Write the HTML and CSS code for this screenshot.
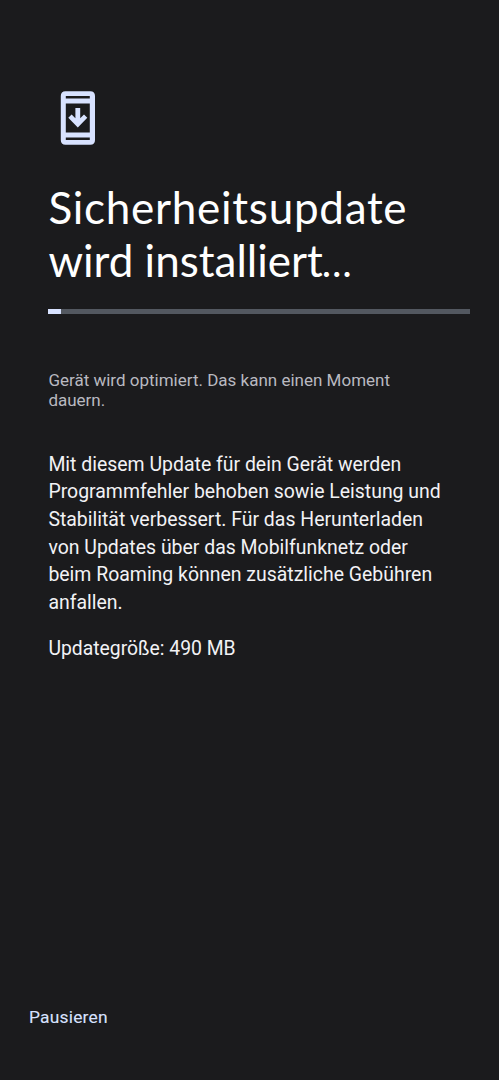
FILE: index.html
```html
<!DOCTYPE html>
<html lang="de">
<head>
<meta charset="utf-8">
<title>Systemupdate</title>
<link rel="stylesheet" href="styles.css">
</head>
<body>
<main class="screen">
  <svg class="icon" viewBox="0 0 36 56" aria-hidden="true">
    <path fill="#d8e2ff" fill-rule="evenodd" d="M5.500 1.200H30.300Q35 1.200 35 6V50Q35 54.800 30.300 54.800H5.500Q.8 54.800 .8 50V6Q.8 1.200 5.500 1.200ZM5.800 6V8.600H29.800V6ZM5.800 13.600V42.400H29.800V13.600ZM5.800 47.400V50H29.800V47.400Z"/>
    <path fill="#d8e2ff" d="M15.400 18H20.200V28.300L24 24.600L27.300 27.800L17.800 37.600L8.300 27.800L11.600 24.600L15.400 28.300Z"/>
  </svg>
  <h1 class="title"><span class="title-line title-first">Sicherheitsupdate</span><span class="title-line title-second">wird installiert<span class="dots">…</span></span></h1>
  <div class="progress"><div class="progress-fill"></div></div>
  <p class="status">Gerät wird optimiert. Das kann einen Moment<br>dauern.</p>
  <p class="description">Mit diesem Update für dein Gerät werden<br>Programmfehler behoben sowie Leistung und<br>Stabilität verbessert. Für das Herunterladen<br>von Updates über das Mobilfunknetz oder<br>beim Roaming können zusätzliche Gebühren<br>anfallen.</p>
  <p class="size">Updategröße: 490 MB</p>
  <button class="pause">Pausieren</button>
</main>
</body>
</html>
```
FILE: styles.css
```css
* { box-sizing: border-box; }
body { margin: 0; background: #1b1b1d; }
.screen {
  display: flex;
  flex-direction: column;
  height: 1080px;
  padding: 90px 29px 49px 48.400px;
  font-family: Roboto, sans-serif;
  color: #f2f2f5;
  white-space: nowrap;
}
.icon { width: 36px; height: 56px; margin-left: 11.600px; }
.title {
  margin: 35px 0 0;
  font: 400 44px/53px Lato, sans-serif;
  color: #fff;
}
.title-line { display: block; width: max-content; }
.title-first { letter-spacing: .73px; }
.title-second { letter-spacing: 0; }
.dots { margin-left: -1px; letter-spacing: 0; font-size: 40px; line-height: 1; }
.progress { height: 5px; margin-top: 21.500px; background: #535860; }
.progress-fill { width: 13px; height: 5px; background: #d8e2ff; }
.status { margin: 56px 0 0; font-size: 17px; line-height: 20px; color: #b9b9c0; }
.description { margin: 41px 0 0; font-size: 19.450px; line-height: 27.700px; }
.size { margin: 18px 0 0; font-size: 19.350px; line-height: 28px; }
.pause {
  align-self: flex-start;
  margin: auto 0 0 -19.400px;
  padding: 0;
  border: 0;
  background: none;
  font: 400 17.400px/28px Roboto, sans-serif;
  letter-spacing: .2px;
  -webkit-text-stroke: .1px #d8e2ff;
  color: #d8e2ff;
}
```
